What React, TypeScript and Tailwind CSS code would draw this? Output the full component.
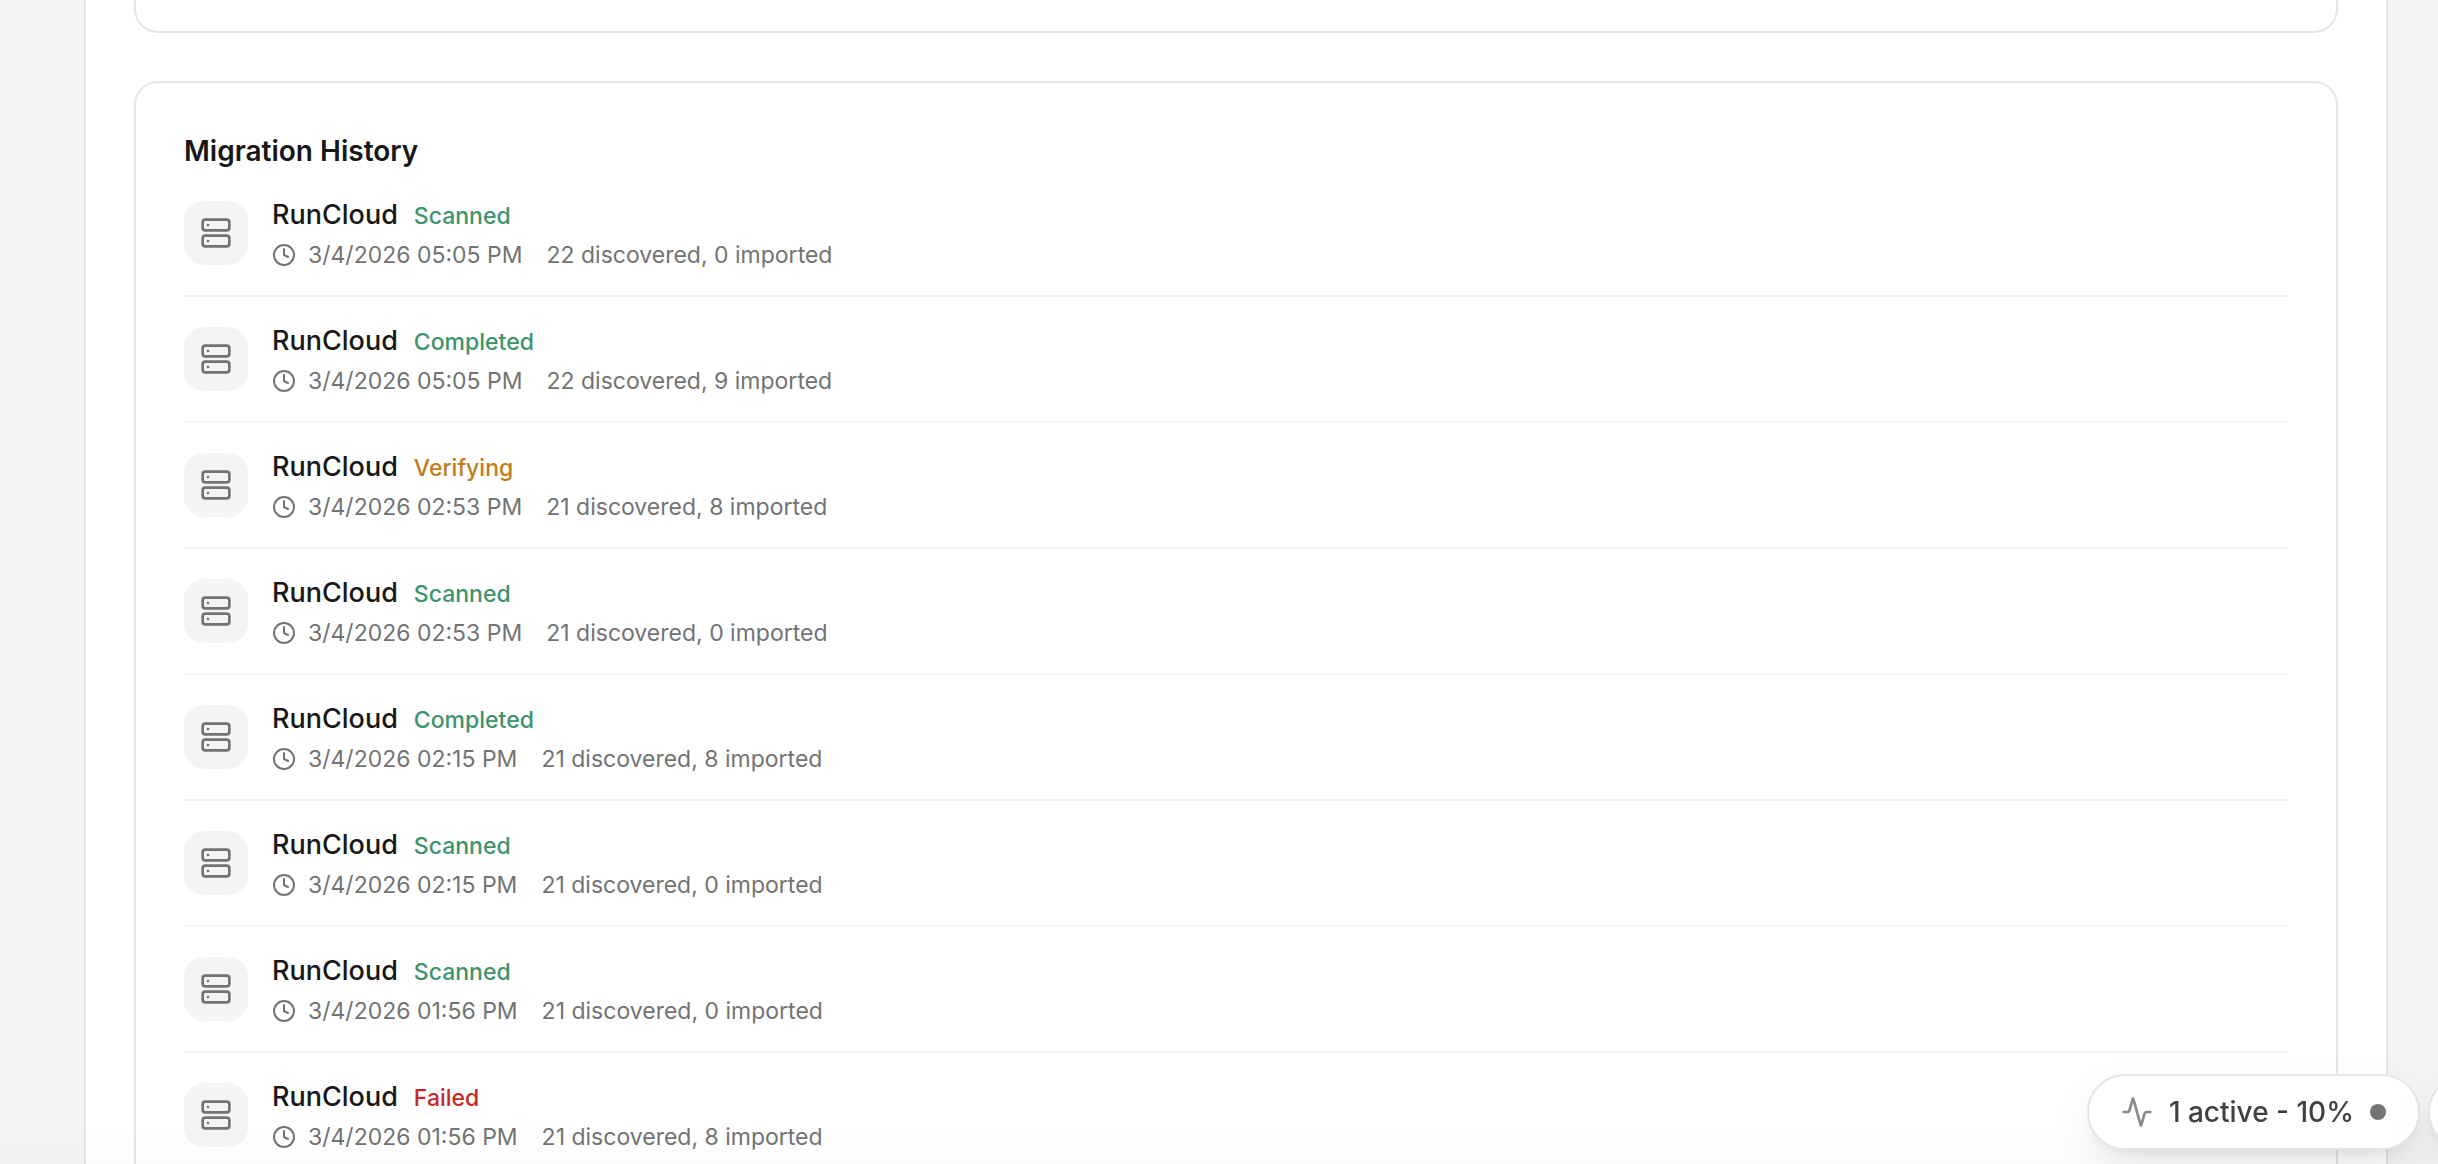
import { Activity, Clock, Server } from "lucide-react";

type Status = "Scanned" | "Completed" | "Verifying" | "Failed";

interface Migration {
  source: string;
  status: Status;
  date: string;
  discovered: number;
  imported: number;
}

const migrations: Migration[] = [
  { source: "RunCloud", status: "Scanned", date: "3/4/2026 05:05 PM", discovered: 22, imported: 0 },
  { source: "RunCloud", status: "Completed", date: "3/4/2026 05:05 PM", discovered: 22, imported: 9 },
  { source: "RunCloud", status: "Verifying", date: "3/4/2026 02:53 PM", discovered: 21, imported: 8 },
  { source: "RunCloud", status: "Scanned", date: "3/4/2026 02:53 PM", discovered: 21, imported: 0 },
  { source: "RunCloud", status: "Completed", date: "3/4/2026 02:15 PM", discovered: 21, imported: 8 },
  { source: "RunCloud", status: "Scanned", date: "3/4/2026 02:15 PM", discovered: 21, imported: 0 },
  { source: "RunCloud", status: "Scanned", date: "3/4/2026 01:56 PM", discovered: 21, imported: 0 },
  { source: "RunCloud", status: "Failed", date: "3/4/2026 01:56 PM", discovered: 21, imported: 8 },
];

const statusColors: Record<Status, string> = {
  Scanned: "text-[#3d936c]",
  Completed: "text-[#3d936c]",
  Verifying: "text-[#c27c1a]",
  Failed: "text-[#c62828]",
};

const MigrationRow = ({ migration }: { migration: Migration }) => (
  <li className="flex items-center gap-6 border-b-2 border-[#f4f4f4] py-6 first:pt-0 last:border-b-0">
    <div className="flex size-16 shrink-0 items-center justify-center rounded-[20px] bg-[#f4f4f4] text-[#737373]">
      <Server className="size-8" />
    </div>
    <div className="min-w-0">
      <div className="flex items-baseline gap-4">
        <span className="text-[27px] leading-10 font-medium text-[#171717]">{migration.source}</span>
        <span className={`text-[23px] leading-8 font-medium ${statusColors[migration.status]}`}>
          {migration.status}
        </span>
      </div>
      <div className="mt-1 flex items-center gap-6 text-[23px] leading-8 text-[#737373]">
        <span className="flex items-center gap-3">
          <Clock className="size-6" />
          {migration.date}
        </span>
        <span>
          {migration.discovered} discovered, {migration.imported} imported
        </span>
      </div>
    </div>
  </li>
);

export default function App() {
  return (
    <div className="h-screen overflow-hidden bg-[#f4f4f4] pr-[50px] pl-[84px] font-['Inter',sans-serif]">
      <main className="border-x-2 border-[#e5e5e5] bg-white px-12">
        <section className="h-[33px] rounded-b-3xl border-2 border-t-0 border-[#e5e5e5]" />

        <section className="mt-12 rounded-3xl border-2 border-[#e5e5e5] p-12">
          <h2 className="mb-6 text-[28px] leading-10 font-semibold text-[#171717]">Migration History</h2>
          <ul>
            {migrations.map((migration, i) => (
              <MigrationRow key={i} migration={migration} />
            ))}
          </ul>
        </section>
      </main>

      <div className="pointer-events-none fixed inset-x-0 bottom-0 h-10 bg-linear-to-t from-black/1 to-transparent" />

      <div className="fixed -right-[66px] bottom-3.5 flex gap-2">
        <button className="flex h-[76px] items-center gap-4 rounded-full border-2 border-[#e5e5e5] bg-white px-8 text-[28px] font-medium text-[#404040] shadow-[0_20px_50px_-6px_rgba(0,0,0,0.1),0_8px_16px_-8px_rgba(0,0,0,0.1)]">
          <Activity className="size-8 text-[#8a8a8a]" />
          1 active - 10%
          <span className="size-4 rounded-full bg-[#737373]" />
        </button>
        <button
          aria-label="Open chat"
          className="size-[76px] rounded-full border-2 border-[#e5e5e5] bg-white shadow-[0_20px_50px_-6px_rgba(0,0,0,0.1),0_8px_16px_-8px_rgba(0,0,0,0.1)]"
        />
      </div>
    </div>
  );
}
